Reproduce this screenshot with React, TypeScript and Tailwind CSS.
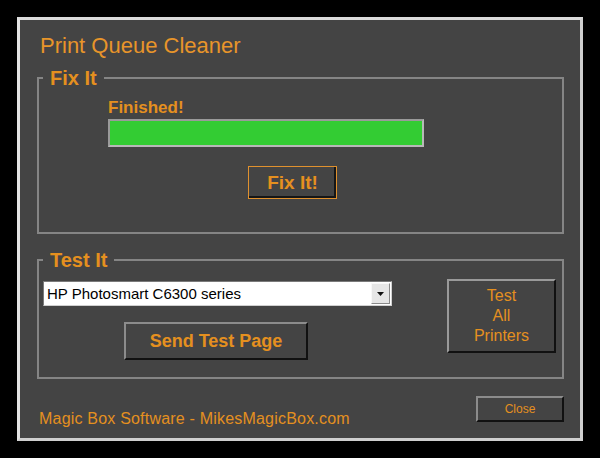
import React from "react";

const orange = "text-[#e5901f]";

export default function App() {
  return (
    <div
      className="w-[600px] h-[458px] bg-black pt-[17px] pl-[17px]"
      style={{ fontFamily: '"Liberation Sans", Arial, sans-serif' }}
    >
      <div className="w-[566px] h-[424px] border-[3px] border-t-[#dcdcdc] border-l-[#e4e4e4] border-r-[#cfcfcf] border-b-[#cfcfcf] bg-[#444444] flex flex-col">
        <h1 className="ml-[20px] mt-[13px] text-[22px] leading-[25px] text-[#e8952a]">
          Print Queue Cleaner
        </h1>

        <fieldset className="ml-[17px] mt-[10px] w-[527px] border-2 border-[#858585] pb-[33px]">
          <legend className={`ml-[4px] px-[7px] text-[20px] leading-[20px] font-bold ${orange}`}>
            Fix It
          </legend>
          <div className="pl-[69px] pt-[11px] flex flex-col items-start">
            <div className={`text-[17px] leading-[18px] font-bold ${orange}`}>Finished!</div>
            <div className="mt-[2px] w-[316px] h-[28px] border-2 border-t-[#9a9a9a] border-l-[#9a9a9a] border-r-[#b8b8b8] border-b-[#b8b8b8] bg-[#33cc33]" />
            <button className="mt-[19px] ml-[140px] w-[89px] h-[33px] border border-[#e0912e] shadow-[inset_-2px_-2px_0_#161616] bg-[#444444] flex items-center justify-center">
              <span className={`text-[19px] font-bold leading-[20px] ${orange}`}>Fix It!</span>
            </button>
          </div>
        </fieldset>

        <fieldset className="ml-[17px] mt-[16px] w-[527px] border-2 border-[#858585] pb-[17px]">
          <legend className={`ml-[4px] px-[7px] text-[20px] leading-[20px] font-bold ${orange}`}>
            Test It
          </legend>
          <div className="pt-[9px] flex items-start">
            <div className="ml-[4px] mt-[2px] flex flex-col items-start">
              <div className="w-[349px] h-[25px] bg-white border border-t-[#7a7a7a] border-l-[#7a7a7a] border-r-[#d0d0d0] border-b-[#d0d0d0] flex items-center">
                <span className="flex-1 pl-[3px] text-[15px] leading-[18px] text-black">
                  HP Photosmart C6300 series
                </span>
                <div className="w-[19px] h-[21px] mr-[1px] bg-[#e6e6e6] border border-t-[#f8f8f8] border-l-[#f8f8f8] border-r-[#8a8a8a] border-b-[#8a8a8a] flex items-center justify-center">
                  <svg width="7" height="4" viewBox="0 0 7 4">
                    <path d="M0 0 H7 L3.5 4 Z" fill="#111" />
                  </svg>
                </div>
              </div>
              <button className="mt-[16px] ml-[81px] w-[184px] h-[38px] border-2 border-t-[#8c8c8c] border-l-[#8c8c8c] border-r-[#111] border-b-[#111] bg-[#444444] flex items-center justify-center">
                <span className={`text-[18px] font-bold leading-[20px] ${orange}`}>Send Test Page</span>
              </button>
            </div>
            <button className="ml-auto mr-[6px] w-[109px] h-[74px] border-2 border-t-[#9a9a9a] border-l-[#9a9a9a] border-r-[#111] border-b-[#111] bg-[#444444] flex flex-col items-center justify-center">
              <span className={`text-[16px] leading-[20px] ${orange}`}>Test</span>
              <span className={`text-[16px] leading-[20px] ${orange}`}>All</span>
              <span className={`text-[16px] leading-[20px] ${orange}`}>Printers</span>
            </button>
          </div>
        </fieldset>

        <div className="mt-[17px] flex items-start">
          <div className={`ml-[19px] mt-[14px] text-[16px] leading-[18px] tracking-[0.2px] ${orange}`}>
            Magic Box Software - MikesMagicBox.com
          </div>
          <button className="ml-auto mr-[16px] w-[88px] h-[26px] border-2 border-t-[#8c8c8c] border-l-[#8c8c8c] border-r-[#111] border-b-[#111] bg-[#444444] flex items-center justify-center">
            <span className={`text-[12px] leading-[14px] ${orange}`}>Close</span>
          </button>
        </div>
      </div>
    </div>
  );
}
